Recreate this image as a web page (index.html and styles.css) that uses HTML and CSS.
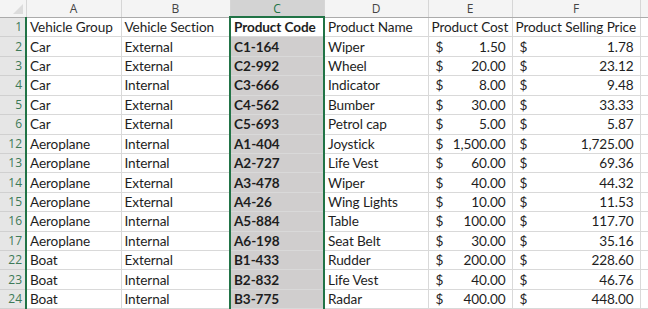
FILE: index.html
```html
<!DOCTYPE html>
<html lang="en">

<head>
    <meta charset="UTF-8">
    <title>Products</title>
    <link rel="stylesheet" href="styles.css">
</head>

<body>
    <table class="sheet">
        <colgroup>
            <col class="w-rh">
            <col class="w-a">
            <col class="w-b">
            <col class="w-c">
            <col class="w-d">
            <col class="w-e">
            <col class="w-f">
            <col class="w-g">
        </colgroup>
        <thead>
            <tr class="letters">
                <th class="corner"><span class="tri"></span></th>
                <th>A</th>
                <th>B</th>
                <th class="sel-head">C</th>
                <th>D</th>
                <th>E</th>
                <th>F</th>
                <th class="last"></th>
            </tr>
        </thead>
        <tbody>
            <tr>
                <th class="rn">1</th>
                <td>Vehicle Group</td>
                <td>Vehicle Section</td>
                <td class="code active">Product Code</td>
                <td>Product Name</td>
                <td>Product Cost</td>
                <td>Product Selling Price</td>
                <td></td>
            </tr>
        </tbody>
        <tbody id="rows"></tbody>
    </table>

    <script>
        const data = [
            [2, 'Car', 'External', 'C1-164', 'Wiper', '1.50', '1.78'],
            [3, 'Car', 'External', 'C2-992', 'Wheel', '20.00', '23.12'],
            [4, 'Car', 'Internal', 'C3-666', 'Indicator', '8.00', '9.48'],
            [5, 'Car', 'External', 'C4-562', 'Bumber', '30.00', '33.33'],
            [6, 'Car', 'External', 'C5-693', 'Petrol cap', '5.00', '5.87'],
            [12, 'Aeroplane', 'Internal', 'A1-404', 'Joystick', '1,500.00', '1,725.00'],
            [13, 'Aeroplane', 'Internal', 'A2-727', 'Life Vest', '60.00', '69.36'],
            [14, 'Aeroplane', 'External', 'A3-478', 'Wiper', '40.00', '44.32'],
            [15, 'Aeroplane', 'External', 'A4-26', 'Wing Lights', '10.00', '11.53'],
            [16, 'Aeroplane', 'Internal', 'A5-884', 'Table', '100.00', '117.70'],
            [17, 'Aeroplane', 'Internal', 'A6-198', 'Seat Belt', '30.00', '35.16'],
            [22, 'Boat', 'External', 'B1-433', 'Rudder', '200.00', '228.60'],
            [23, 'Boat', 'Internal', 'B2-832', 'Life Vest', '40.00', '46.76'],
            [24, 'Boat', 'Internal', 'B3-775', 'Radar', '400.00', '448.00']
        ]

        const tbody = document.getElementById('rows')

        function money(v) {
            return '<span class="cur">$</span><span class="amt">' + v + '</span>'
        }

        data.forEach(r => {
            const tr = document.createElement('tr')
            tr.innerHTML =
                '<th class="rn">' + r[0] + '</th>' +
                '<td>' + r[1] + '</td>' +
                '<td>' + r[2] + '</td>' +
                '<td class="code picked">' + r[3] + '</td>' +
                '<td>' + r[4] + '</td>' +
                '<td class="money">' + money(r[5]) + '</td>' +
                '<td class="money">' + money(r[6]) + '</td>' +
                '<td></td>'
            tbody.appendChild(tr)
        })
    </script>
</body>

</html>
```

FILE: styles.css
```css
body {
    margin: 0;
    background: #ffffff;
    font-family: 'Lato', 'Open Sans', sans-serif;
    overflow: hidden;
}

.sheet {
    border-collapse: collapse;
    table-layout: fixed;
    width: 656px;
    color: #1e1e1e;
    font-size: 13.6px;
    letter-spacing: -0.1px;
}

.w-rh { width: 26px; }
.w-a { width: 95px; }
.w-b { width: 109px; }
.w-c { width: 94px; }
.w-d { width: 104px; }
.w-e { width: 84px; }
.w-f { width: 128px; }
.w-g { width: 16px; }

.sheet td {
    height: 18.43px;
    padding: 0 3px;
    border: 1px solid #d9d9d9;
    white-space: nowrap;
    overflow: hidden;
    line-height: 16px;
    vertical-align: middle;
}

/* column letters */
.letters th {
    height: 16px;
    padding: 0;
    background: #f4f4f4;
    border-right: 1px solid #d6d6d6;
    border-bottom: 1px solid #ababab;
    color: #444444;
    font-weight: normal;
    font-size: 12px;
    line-height: 15px;
    letter-spacing: 0;
    font-family: 'Open Sans', 'Lato', sans-serif;
}

.letters .corner {
    position: relative;
    background: #f4f4f4;
}

.tri {
    position: absolute;
    right: 3px;
    bottom: 3px;
    width: 0;
    height: 0;
    border-left: 10px solid transparent;
    border-bottom: 10px solid #dcdcdc;
}

.letters .sel-head {
    background: #d3d3d3;
    color: #217346;
    border-bottom: 2px solid #217346;
}

.letters .last {
    border-right: none;
}

/* row numbers */
.rn {
    padding: 0 3px 0 0;
    background: #e6e6e6;
    color: #3d7a58;
    font-weight: normal;
    font-size: 12px;
    letter-spacing: 0;
    text-align: right;
    font-family: 'Open Sans', 'Lato', sans-serif;
    border-bottom: 1px solid #d0d0d0;
    border-right: 2px solid #217346;
    vertical-align: middle;
    line-height: 16px;
}

.code {
    font-weight: bold;
    border-left: 2px solid #217346 !important;
    border-right: 2px solid #217346 !important;
}

.picked {
    background: #d0cece;
    border-top-color: #c4c4c4;
    border-bottom-color: #c4c4c4;
}

.money .cur {
    float: left;
    padding-left: 4px;
}

.money .amt {
    float: right;
    padding-right: 3px;
}
```
